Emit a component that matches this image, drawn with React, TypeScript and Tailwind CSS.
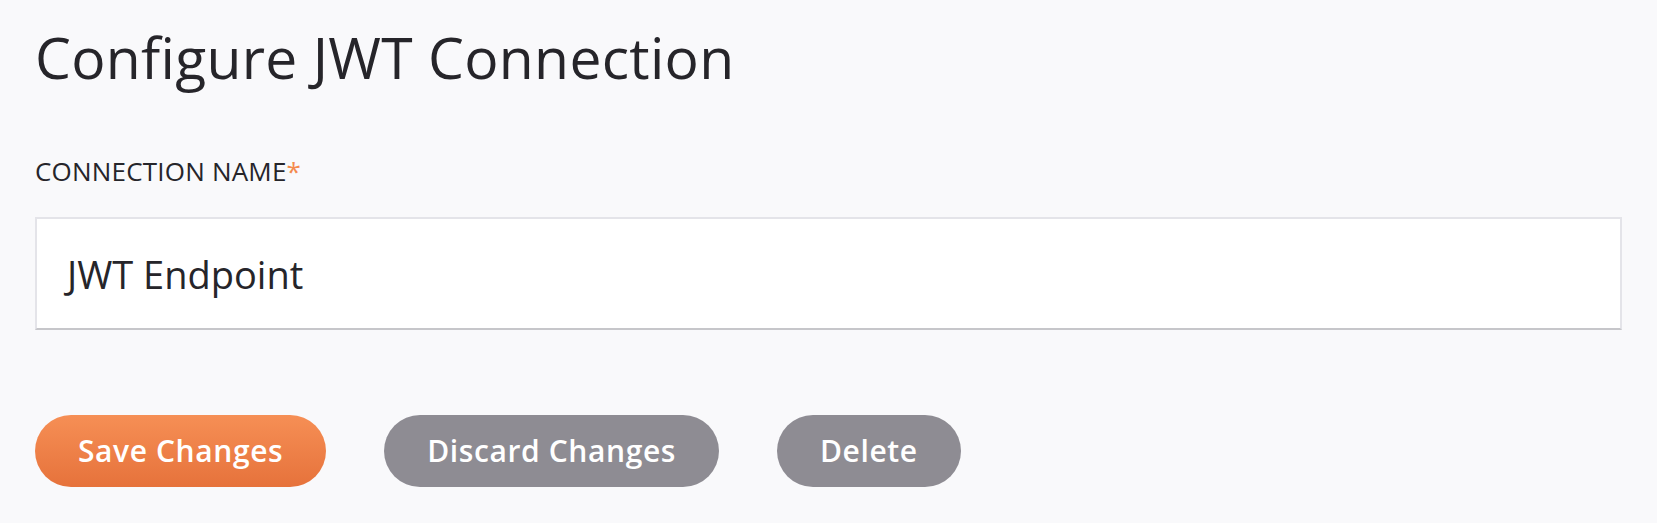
import React from 'react';

function App() {
  return (
    <div className="min-h-[523px] w-full bg-[#f9f9fb] px-[35px] pt-[23px] font-['Open_Sans',sans-serif] text-[#26252a]">
      {/* Title */}
      <h1 className="text-[57px] leading-[68px] font-normal tracking-[0.3px]">Configure JWT Connection</h1>

      {/* Connection name field */}
      <div className="mt-[64px]">
        <label className="block text-[26px] leading-[32px] uppercase tracking-[0.2px]">
          Connection Name<span className="text-[#f48a4e]">*</span>
        </label>
        <div className="mt-[30px] flex h-[113px] items-center border-2 border-[#e4e4e9] border-b-[#c6c6ca] bg-white pl-[30px]">
          <span className="text-[38px] leading-[46px]">JWT Endpoint</span>
        </div>
      </div>

      {/* Actions */}
      <div className="mt-[85px] flex items-center gap-[58px]">
        <button className="h-[72px] rounded-full bg-gradient-to-b from-[#f68f55] to-[#e6723b] px-[43px] text-[30px] leading-[72px] font-semibold tracking-[0.6px] text-white">
          Save Changes
        </button>
        <button className="h-[72px] rounded-full bg-[#8e8c93] px-[43px] text-[30px] leading-[72px] font-semibold tracking-[0.6px] text-white">
          Discard Changes
        </button>
        <button className="h-[72px] rounded-full bg-[#8e8c93] px-[43px] text-[30px] leading-[72px] font-semibold tracking-[0.6px] text-white">
          Delete
        </button>
      </div>
    </div>
  );
}

export default App;
